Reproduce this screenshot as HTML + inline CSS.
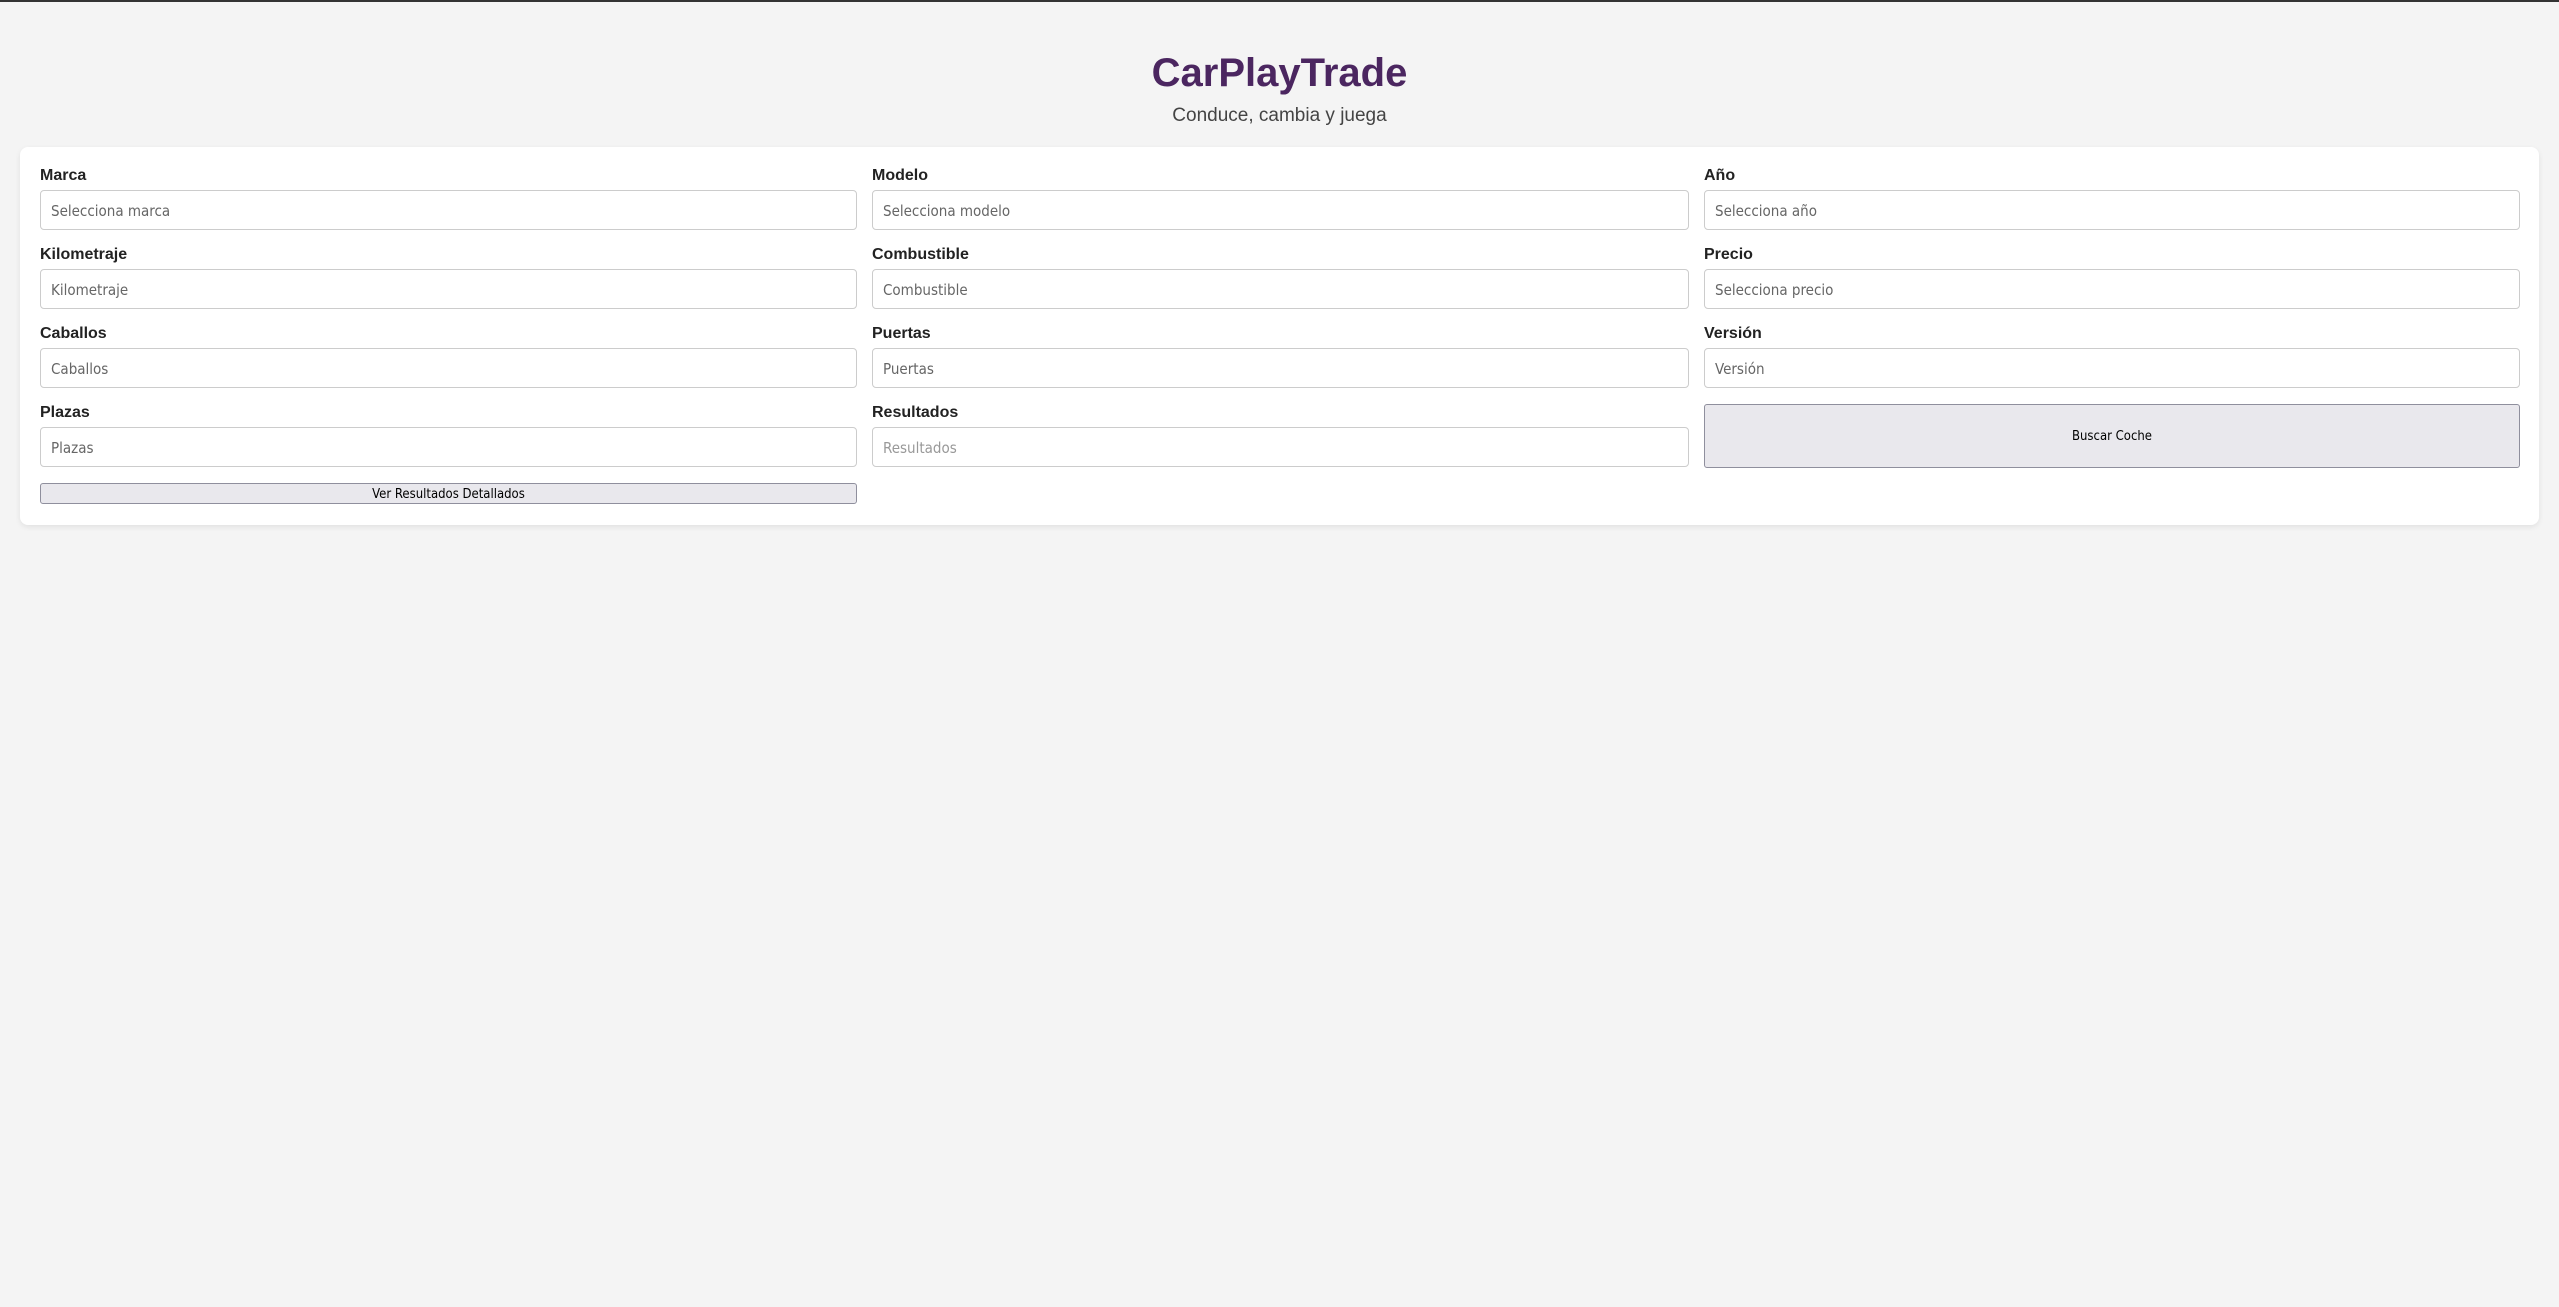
<!DOCTYPE html>
<html><head><meta charset="utf-8"><style>
*{box-sizing:border-box;margin:0;padding:0}
html,body{width:2559px;height:1307px;background:#f4f4f4;font-family:"Liberation Sans",Arial,sans-serif;overflow:hidden}
.bar{height:2px;background:#333}
h1{position:absolute;top:49px;left:0;width:2559px;text-align:center;font-size:40px;font-weight:bold;color:#4b2660;line-height:48px}
.sub{position:absolute;top:104px;left:0;width:2559px;text-align:center;font-size:19px;color:#444;line-height:24px}
.card{position:absolute;left:20px;top:147px;width:2519px;height:378px;background:#fff;border-radius:8px;box-shadow:0 2px 6px rgba(0,0,0,.08);padding:20px 18px 20px 20px}
.grid{display:grid;grid-template-columns:817px 817px 816px;column-gap:15px;row-gap:16px;grid-auto-rows:63px}
label{display:block;font-weight:bold;font-size:16px;color:#222;height:23px;line-height:18px}
.in{height:40px;border:1px solid #ccc;border-radius:4px;padding:0 10px;color:#666;line-height:40px;font-family:"DejaVu Sans Condensed","Liberation Sans",sans-serif;font-size:15px}
.in.l{color:#999}
.btn{background:#e9e8ed;border:1px solid #8f8f9d;border-radius:3px;font-size:13px;color:#000;text-align:center;font-family:"DejaVu Sans Condensed","Liberation Sans",sans-serif}
.big{height:64px;line-height:64px}
.ver{margin-top:16px;width:817px;height:21px;line-height:21px}
</style></head><body>
<div class="bar"></div>
<h1>CarPlayTrade</h1>
<div class="sub">Conduce, cambia y juega</div>
<div class="card">
<div class="grid">
<div><label>Marca</label><div class="in">Selecciona marca</div></div>
<div><label>Modelo</label><div class="in">Selecciona modelo</div></div>
<div><label>Año</label><div class="in">Selecciona año</div></div>
<div><label>Kilometraje</label><div class="in">Kilometraje</div></div>
<div><label>Combustible</label><div class="in">Combustible</div></div>
<div><label>Precio</label><div class="in">Selecciona precio</div></div>
<div><label>Caballos</label><div class="in">Caballos</div></div>
<div><label>Puertas</label><div class="in">Puertas</div></div>
<div><label>Versión</label><div class="in">Versión</div></div>
<div><label>Plazas</label><div class="in">Plazas</div></div>
<div><label>Resultados</label><div class="in l">Resultados</div></div>
<div class="btn big">Buscar Coche</div>
</div>
<div class="btn ver">Ver Resultados Detallados</div>
</div>
</body></html>
